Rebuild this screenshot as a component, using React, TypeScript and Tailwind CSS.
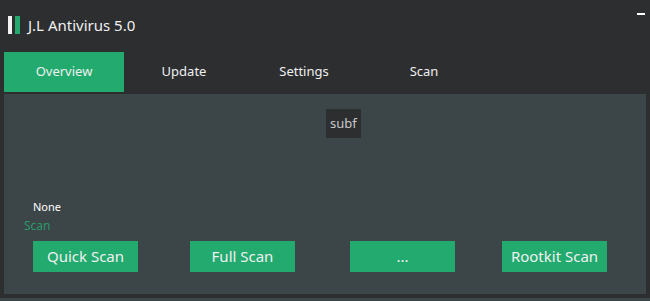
import React from "react";

export default function App() {
  const font = { fontFamily: '"Noto Sans", "Open Sans", sans-serif' };
  return (
    <div className="w-[650px] h-[301px] bg-[#2d2e30] flex flex-col overflow-hidden text-white" style={font}>
      <div className="h-[52px] flex items-start relative">
        <div className="flex items-start mt-[16px] ml-[8px]">
          <div className="w-[4px] h-[18px] bg-[#f2f2f2]" />
          <div className="w-[5px] h-[18px] bg-[#22aa6f] ml-[3px]" />
          <div className="ml-[8px] text-[15px] leading-[18px] text-[#f0f0f0]">J.L Antivirus 5.0</div>
        </div>
        <div className="absolute left-[637px] top-[13px] w-[8px] h-[2px] bg-white" />
      </div>
      <div className="h-[40px] flex pl-[4px] text-[13px] text-[#f0f0f0]">
        <div className="w-[120px] flex items-center justify-center bg-[#22aa6f]">Overview</div>
        <div className="w-[120px] flex items-center justify-center">Update</div>
        <div className="w-[120px] flex items-center justify-center">Settings</div>
        <div className="w-[120px] flex items-center justify-center">Scan</div>
      </div>
      <div className="mt-[2px] ml-[4px] w-[642px] h-[200px] bg-[#3c4548] flex flex-col">
        <div className="mt-[15px] ml-[322px] self-start h-[29px] px-[4px] bg-[#2d2e30] flex items-center text-[13px] text-[#c8c8c8]">subf</div>
        <div className="mt-[63px] ml-[29px] text-[11px] leading-[12px] text-white">None</div>
        <div className="mt-[6px] ml-[20px] text-[12px] leading-[14px] text-[#2a9a6a]">Scan</div>
        <div className="mt-[8px] flex text-[15px] text-[#f0f0f0]">
          <div className="ml-[29px] w-[105px] h-[31px] bg-[#22aa6f] flex items-center justify-center">Quick Scan</div>
          <div className="ml-[52px] w-[105px] h-[31px] bg-[#22aa6f] flex items-center justify-center">Full Scan</div>
          <div className="ml-[55px] w-[105px] h-[31px] bg-[#22aa6f] flex items-center justify-center">...</div>
          <div className="ml-[47px] w-[105px] h-[31px] bg-[#22aa6f] flex items-center justify-center">Rootkit Scan</div>
        </div>
      </div>
      <div className="mt-[4px] flex-1 bg-[#3c4548]" />
    </div>
  );
}
